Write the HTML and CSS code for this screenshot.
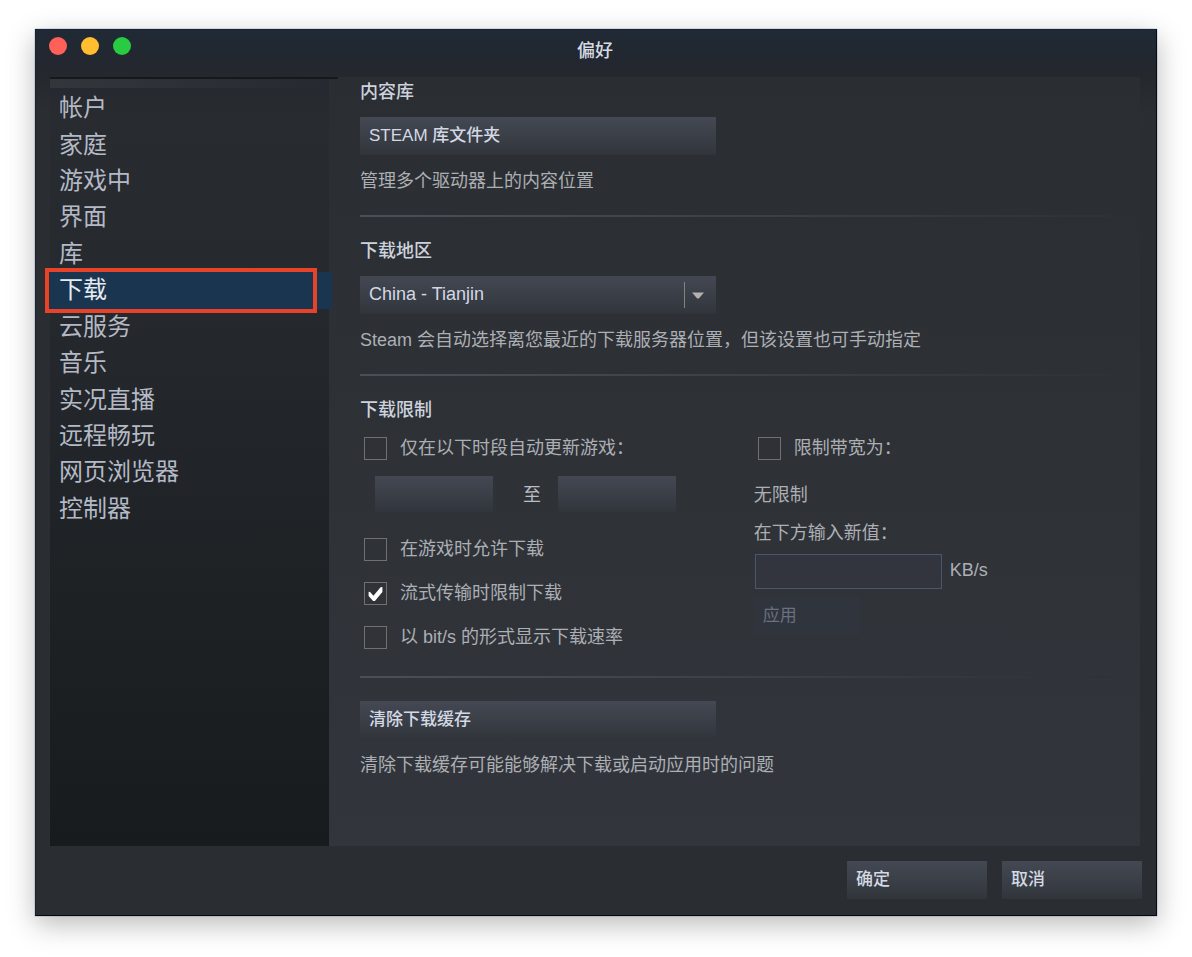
FILE: index.html
```html
<!DOCTYPE html>
<html lang="zh-CN">
<head>
    <meta charset="UTF-8">
    <meta name="viewport" content="width=device-width, initial-scale=1.0">
    <title>偏好</title>
    <link rel="stylesheet" href="styles.css">
</head>
<body>
    <div class="window">
        <header class="titlebar">
            <div class="lights">
                <button class="light close" type="button" aria-label="关闭"></button>
                <button class="light minimize" type="button" aria-label="最小化"></button>
                <button class="light zoom" type="button" aria-label="缩放"></button>
            </div>
            <h1>偏好</h1>
        </header>

        <div class="main">
            <!-- Menu -->
            <nav class="sidebar">
                <a href="#">帐户</a>
                <a href="#">家庭</a>
                <a href="#">游戏中</a>
                <a href="#">界面</a>
                <a href="#">库</a>
                <a href="#" class="active">下载</a>
                <a href="#">云服务</a>
                <a href="#">音乐</a>
                <a href="#">实况直播</a>
                <a href="#">远程畅玩</a>
                <a href="#">网页浏览器</a>
                <a href="#">控制器</a>
            </nav>

            <main class="pane">
                <section>
                    <h2>内容库</h2>
                    <button class="btn wide" type="button">STEAM 库文件夹</button>
                    <p class="desc">管理多个驱动器上的内容位置</p>
                </section>

                <section>
                    <h2><label for="region">下载地区</label></h2>
                    <div class="select-box wide">
                        <select id="region" class="btn">
                            <option>China - Tianjin</option>
                        </select>
                        <svg class="arrow" width="12" height="7" viewBox="0 0 12 7"><path d="M0 0.5h12L6.8 6.5H5.2z" fill="#b5b1ac"/></svg>
                    </div>
                    <p class="desc">Steam 会自动选择离您最近的下载服务器位置，但该设置也可手动指定</p>
                </section>

                <section>
                    <h2>下载限制</h2>
                    <div class="limits">
                        <div class="options">
                            <label class="check"><input type="checkbox"><span>仅在以下时段自动更新游戏：</span></label>
                            <div class="times">
                                <select class="btn" aria-label="开始时间"></select>
                                <span>至</span>
                                <select class="btn" aria-label="结束时间"></select>
                            </div>
                            <label class="check"><input type="checkbox"><span>在游戏时允许下载</span></label>
                            <label class="check"><input type="checkbox" checked><span>流式传输时限制下载</span></label>
                            <label class="check"><input type="checkbox"><span>以 bit/s 的形式显示下载速率</span></label>
                        </div>
                        <div class="bandwidth">
                            <label class="check"><input type="checkbox"><span>限制带宽为：</span></label>
                            <p class="current">无限制</p>
                            <label class="new-value" for="rate">在下方输入新值：</label>
                            <div class="rate">
                                <input id="rate" type="text">
                                <span>KB/s</span>
                            </div>
                            <button class="btn apply" type="button" disabled>应用</button>
                        </div>
                    </div>
                </section>

                <section>
                    <button class="btn wide" type="button">清除下载缓存</button>
                    <p class="desc">清除下载缓存可能能够解决下载或启动应用时的问题</p>
                </section>
            </main>
        </div>

        <footer>
            <button class="btn" type="button">确定</button>
            <button class="btn" type="button">取消</button>
        </footer>
    </div>
</body>
</html>
```

FILE: styles.css
```css
* {
    box-sizing: border-box;
}
body {
    margin: 0;
    padding: 29px 35px 41px;
    background-color: #fff;
    color: #acafb4;
    font-family: "Liberation Sans", "Noto Sans CJK SC", sans-serif;
    font-size: 18px;
    line-height: 24px;
}
h1, h2, p {
    margin: 0;
    font-size: 18px;
}
button, select, input {
    font-family: inherit;
    margin: 0;
}
.window {
    display: flex;
    flex-direction: column;
    min-height: calc(100vh - 70px);
    border: 1px solid #14243a;
    border-right-color: #020c1c;
    border-bottom-color: #030a14;
    background: linear-gradient(#1f2a36, #23272f 32px, #25282c 48px, #2a2d32 80px);
    box-shadow: 0 0 1px rgba(0, 0, 0, 0.6), 0 8px 26px rgba(0, 0, 0, 0.28);
}

/* Title bar */
.titlebar {
    position: relative;
    height: 47px;
    padding: 9px 2px 0 0;
}
.titlebar h1 {
    color: #d5dae3;
    font-weight: 500;
    line-height: 24px;
    text-align: center;
}
.lights {
    position: absolute;
    top: 7px;
    left: 13px;
    display: flex;
    gap: 14px;
}
.light {
    width: 18px;
    height: 18px;
    padding: 0;
    border: none;
    border-radius: 50%;
}
.close {
    background-color: #ff6058;
}
.minimize {
    background-color: #ffbe2f;
}
.zoom {
    background-color: #28cb41;
}

.main {
    display: flex;
    flex: 1;
    padding: 0 16px 0 14px;
    background: linear-gradient(#25282f, #282b2f 40px, #26292d 200px, #171b1e) 14px 0 / 279px 100% no-repeat;
}

/* Menu */
.sidebar {
    position: relative;
    display: grid;
    grid-auto-rows: 1fr;
    flex: none;
    width: 279px;
    height: 450px;
    padding-top: 13px;
}
.sidebar::before {
    content: "";
    position: absolute;
    top: 0;
    left: 0;
    width: 288px;
    height: 2px;
    background-color: #15181c;
}
.sidebar::after {
    content: "";
    position: absolute;
    top: 2px;
    left: 0;
    width: 279px;
    height: 9px;
    background: linear-gradient(to right, #33363a, #26292f);
}
.sidebar a {
    display: flex;
    align-items: center;
    padding-left: 9px;
    color: #b3b9c5;
    font-size: 24px;
    text-decoration: none;
}
.sidebar .active {
    position: relative;
    margin-right: -3px;
    background-color: #1a3550;
    color: #e6ebf2;
}
.sidebar .active::after {
    content: "";
    position: absolute;
    top: -4px;
    right: 15px;
    bottom: -4px;
    left: -5px;
    border: 4px solid #e84228;
}

/* Settings */
.pane {
    flex: 1;
    padding: 4px 30px 0 31px;
    background: linear-gradient(#2a2d31, #32363c);
}
section {
    padding: 23px 0 22px;
    border-bottom: 2px solid;
    border-image: linear-gradient(to right, #4a505a, #2e3236) 1;
}
section:first-child {
    padding-top: 0;
}
section:last-child {
    padding-bottom: 0;
    border-bottom: none;
}
h2 {
    margin-bottom: 14px;
    color: #cdd3de;
    font-weight: 500;
    line-height: 22px;
}
.desc {
    margin-top: 14px;
}
.btn {
    display: block;
    height: 38px;
    padding: 0 9px 5px;
    border: none;
    border-radius: 0;
    appearance: none;
    background: linear-gradient(#444853, #31353b);
    color: #d3d9e4;
    font-size: 17px;
    font-weight: 500;
    text-align: left;
}
.wide {
    width: 356px;
}
.select-box {
    position: relative;
}
.select-box .btn {
    width: 100%;
    padding-bottom: 2px;
    font-size: 18px;
    font-weight: 400;
}
.select-box::after {
    content: "";
    position: absolute;
    top: 6px;
    right: 31px;
    width: 1px;
    height: 26px;
    background-color: #85827e;
}
.arrow {
    position: absolute;
    top: 16px;
    right: 12px;
}
.limits {
    display: grid;
    grid-template-columns: 21fr 19fr;
}
.options {
    display: flex;
    flex-direction: column;
    gap: 17px;
    padding-bottom: 3px;
}
.check {
    display: flex;
    align-items: center;
    gap: 13px;
    height: 27px;
    padding-left: 4px;
}
.check input {
    flex: none;
    width: 23px;
    height: 23px;
    border: 1px solid #71706e;
    appearance: none;
}
.check span {
    padding-bottom: 2px;
}
.check input:checked::before {
    content: "";
    display: block;
    width: 15px;
    height: 15px;
    margin: 4px 3px 2px;
    background-color: #fff;
    clip-path: polygon(4% 32%, 14% 34%, 36% 58%, 84% 2%, 96% 0, 96% 34%, 46% 94%, 34% 94%, 4% 60%);
}
.times {
    display: flex;
    align-items: center;
    margin: -3px 0 7px;
    padding-left: 15px;
}
.times .btn {
    width: 118px;
    height: 36px;
}
.times span {
    width: 65px;
    padding: 2px 0 0 13px;
    text-align: center;
    color: #b9bdc4;
}
.current {
    margin-top: 21px;
}
.new-value {
    display: block;
    margin-top: 14px;
}
.rate {
    display: flex;
    align-items: center;
    gap: 8px;
    margin: 9px 0 8px 1px;
}
.rate input {
    width: 187px;
    height: 35px;
    padding: 0 8px;
    border: 1px solid #4a5670;
    background-color: #32353e;
    color: #d3d9e4;
    font-size: 18px;
}
.rate span {
    padding-bottom: 4px;
}
.apply {
    width: 106px;
    padding-bottom: 6px;
    background: #30343c;
    color: #6b7080;
    font-weight: 400;
}

footer {
    display: flex;
    justify-content: flex-end;
    gap: 15px;
    padding: 15px 14px 16px;
}
footer .btn {
    width: 140px;
}
```
